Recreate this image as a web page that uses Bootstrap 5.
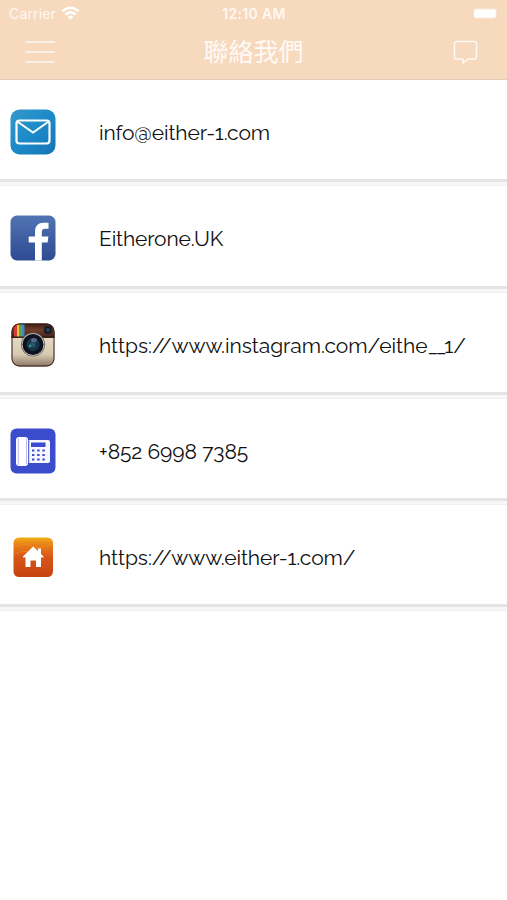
<!DOCTYPE html>
<html lang="zh-Hant">
<head>
<meta charset="utf-8">
<meta name="viewport" content="width=device-width, initial-scale=1">
<title>聯絡我們</title>
<link href="https://cdn.jsdelivr.net/npm/bootstrap@5.3.0/dist/css/bootstrap.min.css" rel="stylesheet">
<style>
body{font-family:Raleway,Lato,"Noto Sans CJK TC",sans-serif;color:#111}
.app-head{background:#f7d9be;height:80px;border-bottom:1px solid #e4cdb9;color:#fff}
.status{height:27px;font:14px/27px Inter,sans-serif;padding:0 10px 0 9px;color:#fff8f2}
.status .carrier{letter-spacing:.15px}
.status .clock{font-weight:600;letter-spacing:.3px;padding-left:2px}
.status>*{flex:1 1 0}
.titlebar{height:49px;padding:0 29px 0 25px}
.titlebar>*{flex:1 1 0}
.titlebar svg{margin-top:1px}
.titlebar h1{font:400 25px/46px "Noto Sans CJK TC",sans-serif;color:#fffaf6;padding:0 0 4px 4px}
.contact{height:106.3px;border:0;padding:0 0 8px 10px}
.contact svg{width:46px;height:46px;flex:none;margin-right:43px;margin-top:6px}
.contact a{font-size:21px;line-height:30px;margin-top:8px;color:#111;white-space:nowrap}
.divider{height:7px;margin-top:-7px;background:#f7f7f7;border-top:3px solid #e4e4e4;border-bottom:1px solid #efefef}
.mail{letter-spacing:-.12px}.fb{letter-spacing:-.16px}.insta{letter-spacing:-.05px}.phone,.web{letter-spacing:-.08px}
.tight{letter-spacing:-2.3px}
</style>
<script src="https://cdn.jsdelivr.net/npm/bootstrap@5.3.0/dist/js/bootstrap.bundle.min.js"></script>
</head>
<body class="bg-white">
<header class="app-head">
  <div class="status d-flex align-items-center">
    <div class="d-flex align-items-center"><span class="carrier">Carrier</span>
      <svg class="ms-1" width="20" height="15" viewBox="-1 0 21 15" fill="none" stroke="#fff" stroke-width="2.7"><path d="M1.4 5.2Q10-2.2 18.6 5.2M4.6 8.6Q10 4 15.4 8.6"/><path d="M6.9 10.7Q10 8.3 13.1 10.7L10 14Z" fill="#fff" stroke="none"/></svg>
    </div>
    <span class="clock text-center">12:10 AM</span>
    <div class="d-flex justify-content-end"><svg width="24" height="11" viewBox="0 0 24 11"><rect x=".4" y=".4" width="23.2" height="10.2" rx="3" fill="#fff" opacity=".45"/><rect x="1.2" y="1.5" width="21.5" height="8" rx="1.5" fill="#fff"/></svg></div>
  </div>
  <nav class="titlebar d-flex align-items-center">
    <div class="d-flex"><svg width="30" height="24" viewBox="0 0 30 24" stroke="#fff" stroke-width="1.5" opacity=".8"><path d="M.5 2H30M.5 12H30M.5 22H29.5"/></svg></div>
    <h1 class="m-0 text-center text-nowrap">聯絡我們</h1>
    <div class="d-flex justify-content-end"><svg width="25" height="25" viewBox="0 0 25 25" fill="none" stroke="#fff" stroke-width="1.5" stroke-linejoin="round" opacity=".85"><path d="M3.5 1.5H21.5Q23.5 1.5 23.5 3.5V17Q23.5 19 21.5 19H14.8L10 23.3V19H3.5Q1.5 19 1.5 17V3.5Q1.5 1.5 3.5 1.5Z"/></svg></div>
  </nav>
</header>
<main>
<ul class="list-unstyled m-0">
<li>
  <div class="contact d-flex align-items-center">
    <svg viewBox="0 0 46 46"><defs><linearGradient id="sky" x2="1" y2="1"><stop stop-color="#3399c9"/><stop offset=".5" stop-color="#1c8aca"/><stop offset="1" stop-color="#1674b5"/></linearGradient></defs><rect x=".5" y=".5" width="45" height="45" rx="9" fill="url(#sky)"/><rect x="6.5" y="11.5" width="33" height="23" rx="3" fill="none" stroke="#fff" stroke-width="2.2"/><path d="M8 13L23 23.5 38 13" fill="none" stroke="#fff" stroke-width="2"/></svg>
    <a class="mail text-decoration-none" href="mailto:info@either-1.com">info@either-1.com</a>
  </div><div class="divider"></div>
</li>
<li>
  <div class="contact d-flex align-items-center">
    <svg viewBox="0 0 46 46"><defs><linearGradient id="blue" x2="0" y2="1"><stop stop-color="#5173b3"/><stop offset="1" stop-color="#2e4b91"/></linearGradient></defs><rect x=".5" y=".5" width="45" height="45" rx="6.5" fill="url(#blue)"/><path d="M25 45.5V27.5H18.7V21.5H25V17C25 10.5 28.5 7.7 33.2 7.7H38.5V13.7H35.2C32.5 13.7 31.8 15 31.8 17.3V21.5H38.4L37.6 27.5H31.8V45.5Z" fill="#fff"/></svg>
    <a class="fb text-decoration-none" href="#">Eitherone.UK</a>
  </div><div class="divider"></div>
</li>
<li>
  <div class="contact d-flex align-items-center">
    <svg viewBox="0 0 46 46"><defs><clipPath id="cam"><rect x="1.5" y="1.5" width="43" height="43" rx="8"/></clipPath><linearGradient id="cream" x2="0" y2="1"><stop stop-color="#f2e7d0"/><stop offset=".7" stop-color="#d8cbb3"/><stop offset="1" stop-color="#806c59"/></linearGradient><linearGradient id="leather" x2="0" y2="1"><stop stop-color="#2f1410"/><stop offset=".5" stop-color="#713d2b"/><stop offset="1" stop-color="#3d201a"/></linearGradient><radialGradient id="lens"><stop stop-color="#38617a"/><stop offset=".35" stop-color="#153c4c"/><stop offset=".6" stop-color="#0a1224"/><stop offset="1" stop-color="#10111b"/></radialGradient></defs>
    <g clip-path="url(#cam)"><rect width="46" height="46" fill="url(#cream)"/><rect width="46" height="16" fill="url(#leather)"/><path d="M4 0H7V15H4Z" fill="#d63a36"/><path d="M7 0H9.5V15H7Z" fill="#edc63e"/><path d="M9.5 0H12V15H9.5Z" fill="#57a856"/><path d="M12 0H14.5V15H12Z" fill="#408bbb"/><path d="M0 15H46" stroke="#2f1a15" stroke-width="1"/><rect x="34" y="4" width="8" height="8" rx="2" fill="#111827" stroke="#452820"/><circle cx="38" cy="8" r="2" fill="#294357"/><circle cx="23" cy="22.5" r="12" fill="#686260"/><circle cx="23" cy="22.5" r="11.2" fill="#c8c0b5"/><circle cx="23" cy="22.5" r="10.5" fill="url(#lens)"/><circle cx="23" cy="22.5" r="5.8" fill="none" stroke="#214d60"/><ellipse cx="24" cy="18" rx="3" ry="2" fill="#8090ad" opacity=".6"/><circle cx="20" cy="24" r="1.4" fill="#409092"/></g><rect x="2" y="2" width="42" height="42" rx="7.5" fill="none" stroke="#351b16" stroke-width="1"/></svg>
    <a class="insta text-decoration-none" href="https://www.instagram.com/eithe__1/">https://www.instagram.com/eithe<span class="tight">__</span>1/</a>
  </div><div class="divider"></div>
</li>
<li>
  <div class="contact d-flex align-items-center">
    <svg viewBox="0 0 46 46"><rect x=".5" y=".5" width="45" height="45" rx="6" fill="#3b4dcc"/><path d="M18 12H38Q40 12 40 14V33Q40 35 38 35H18Z" fill="#f7f7ff"/><rect x="6" y="9" width="12" height="29" rx="3" fill="#fff"/><path d="M8.3 10V37M16.5 11V36" stroke="#b8bdf0" stroke-width="1"/><path d="M18.7 12V35" stroke="#3b4dcc" stroke-width="1"/><rect x="21" y="14.5" width="14.5" height="4.5" fill="#3b4dcc"/><path d="M22 22.5H36M22 27H36M22 31.5H36" stroke="#3b4dcc" stroke-width="2.2" stroke-dasharray="2.4 2.8"/></svg>
    <a class="phone text-decoration-none" href="tel:+85269987385">+852 6998 7385</a>
  </div><div class="divider"></div>
</li>
<li>
  <div class="contact d-flex align-items-center">
    <svg viewBox="0 0 46 46"><defs><linearGradient id="fire" x2="0" y2="1"><stop stop-color="#f2af16"/><stop offset=".18" stop-color="#e8801b"/><stop offset=".5" stop-color="#d85518"/><stop offset="1" stop-color="#c64312"/></linearGradient></defs><rect x="3.5" y="3.5" width="39.5" height="39.5" rx="5.5" fill="url(#fire)"/><path d="M4 14Q13 8 21 12T43 10M4 20Q14 16 20 18" fill="none" stroke="#f5a027" opacity=".4"/><path d="M23.2 12.5L28 17V14.5H31V20L33.5 22.5V23.5H31V33H26V26.5H20.5V33H15.5V23.5H13V22.5Z" fill="#fff"/></svg>
    <a class="web text-decoration-none" href="https://www.either-1.com/">https://www.either-1.com/</a>
  </div><div class="divider"></div>
</li>
</ul>
</main>
</body>
</html>
